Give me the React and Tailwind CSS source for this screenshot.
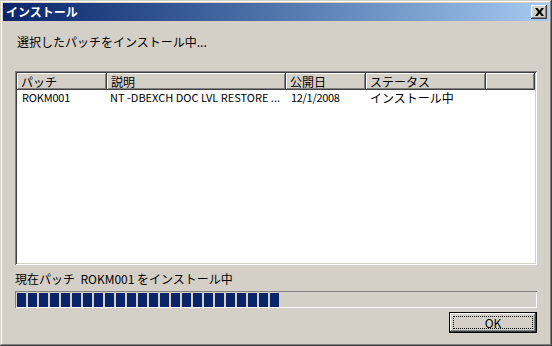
import React from "react";

const font = { fontFamily: '"Noto Sans CJK JP", "Liberation Sans", sans-serif' };

function HeaderCell({ w, children, grow }) {
  return (
    <div
      className={`h-[17px] flex items-center pl-[4px] text-[12px] leading-[14px] text-black bg-[#d4d0c8] shadow-[inset_-1px_-1px_#404040,inset_1px_1px_#ffffff,inset_-2px_-2px_#808080] whitespace-nowrap ${grow ? "flex-1" : ""}`}
      style={grow ? undefined : { width: w }}
    >
      {children}
    </div>
  );
}

export default function App() {
  const blocks = Array.from({ length: 24 });
  return (
    <div
      className="w-[552px] h-[346px] bg-[#d4d0c8] p-[3px] flex flex-col shadow-[inset_-1px_-1px_#404040,inset_1px_1px_#d4d0c8,inset_-2px_-2px_#808080,inset_2px_2px_#ffffff]"
      style={font}
    >
      {/* Title bar */}
      <div className="h-[18px] flex items-center justify-between bg-gradient-to-r from-[#0a246a] to-[#a6caf0] pl-[3px] pr-[2px]">
        <span className="text-white font-bold text-[12px] leading-[14px]">インストール</span>
        <div className="w-[16px] h-[14px] bg-[#d4d0c8] shadow-[inset_-1px_-1px_#404040,inset_1px_1px_#ffffff,inset_-2px_-2px_#808080] flex items-center justify-center pb-[1px]">
          <svg width="9" height="8" viewBox="0 0 9 8">
            <path d="M0 0h2.5l2 2.5 2-2.5H9L6 4l3 4H6.5l-2-2.5-2 2.5H0l3-4z" fill="#000" />
          </svg>
        </div>
      </div>

      {/* Body */}
      <div className="flex-1 flex flex-col px-[12px]">
        <div className="mt-[14px] pl-[2px] h-[14px] text-[12px] leading-[14px] text-black">
          選択したパッチをインストール中...
        </div>

        {/* List view */}
        <div className="mt-[22px] h-[194px] bg-white p-[2px] shadow-[inset_1px_1px_#808080,inset_-1px_-1px_#ffffff,inset_2px_2px_#404040,inset_-2px_-2px_#d4d0c8] flex flex-col">
          <div className="flex">
            <HeaderCell w={90}>パッチ</HeaderCell>
            <HeaderCell w={179}>説明</HeaderCell>
            <HeaderCell w={80}>公開日</HeaderCell>
            <HeaderCell w={120}>ステータス</HeaderCell>
            <HeaderCell grow> </HeaderCell>
          </div>
          <div className="flex h-[15px] items-center text-[11px] leading-[15px] text-black whitespace-nowrap">
            <div className="w-[90px] pl-[5px] tracking-[-0.2px]">ROKM001</div>
            <div className="w-[179px] pl-[3px]">NT -DBEXCH DOC LVL RESTORE ...</div>
            <div className="w-[80px] pl-[5px] tracking-[-0.3px]">12/1/2008</div>
            <div className="w-[120px] pl-[4px] text-[12px]">インストール中</div>
          </div>
        </div>

        <div className="mt-[7px] h-[14px] text-[12px] leading-[14px] text-black whitespace-nowrap">
          現在パッチ&nbsp; ROKM001 をインストール中
        </div>

        {/* Progress bar */}
        <div className="mt-[5px] h-[17px] bg-[#d4d0c8] shadow-[inset_1px_1px_#808080,inset_-1px_-1px_#ffffff] flex items-center gap-[2px] pl-[2px]">
          {blocks.map((_, i) => (
            <div key={i} className="w-[9px] h-[14px] bg-[#0a246a]" />
          ))}
        </div>

        {/* OK button */}
        <div className="mt-[4px] flex justify-end">
          <button className="w-[88px] h-[21px] border border-black bg-[#d4d0c8] shadow-[inset_-1px_-1px_#404040,inset_1px_1px_#ffffff,inset_-2px_-2px_#808080] p-[3px]">
            <div className="w-full h-full border border-dotted border-black flex items-center justify-center text-[12px] leading-[12px] text-black">
              OK
            </div>
          </button>
        </div>
      </div>
    </div>
  );
}
